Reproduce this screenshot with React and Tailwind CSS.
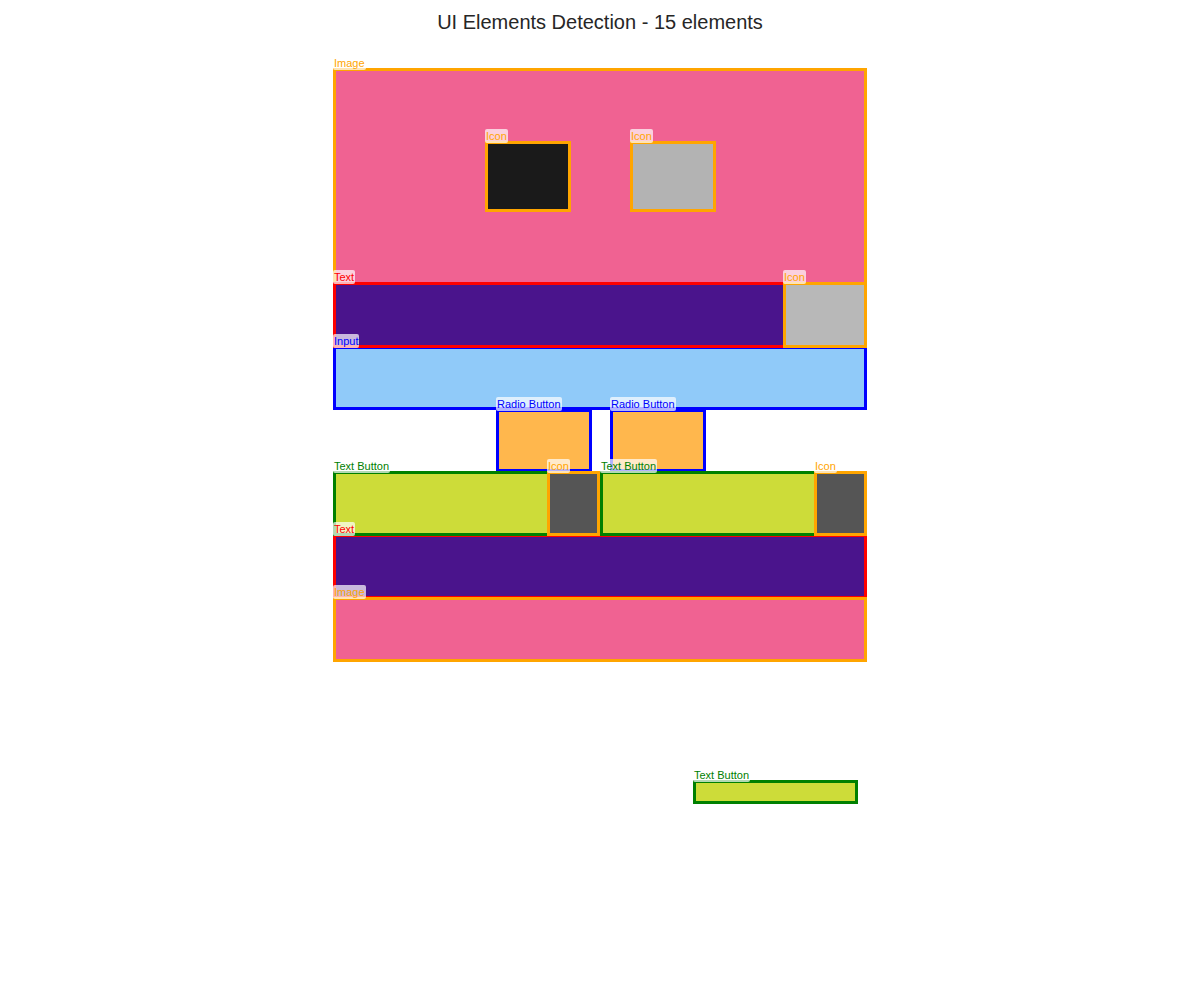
import React from 'react';

// detection boxes, outer coords on the 1200x1000 canvas, drawn in this order
const boxes = [
  { label: 'Image', x: 333, y: 68, w: 534, h: 217, tone: 'image' },
  { label: 'Icon', x: 485, y: 141, w: 86, h: 71, tone: 'iconDark' },
  { label: 'Icon', x: 630, y: 141, w: 86, h: 71, tone: 'iconLight' },
  { label: 'Input', x: 333, y: 346, w: 534, h: 64, tone: 'input' },
  { label: 'Text', x: 333, y: 282, w: 534, h: 66, tone: 'text' },
  { label: 'Icon', x: 783, y: 282, w: 84, h: 66, tone: 'iconGray' },
  { label: 'Radio Button', x: 496, y: 409, w: 96, h: 63, tone: 'radio' },
  { label: 'Radio Button', x: 610, y: 409, w: 96, h: 63, tone: 'radio' },
  { label: 'Text', x: 333, y: 534, w: 534, h: 65, tone: 'text' },
  { label: 'Text Button', x: 333, y: 471, w: 220, h: 65, tone: 'button' },
  { label: 'Icon', x: 547, y: 471, w: 53, h: 65, tone: 'iconMid' },
  { label: 'Text Button', x: 600, y: 471, w: 217, h: 65, tone: 'button' },
  { label: 'Icon', x: 814, y: 471, w: 53, h: 65, tone: 'iconMid' },
  { label: 'Image', x: 333, y: 597, w: 534, h: 65, tone: 'image' },
  { label: 'Text Button', x: 693, y: 780, w: 165, h: 24, tone: 'button' },
];

const toneBox = {
  image: 'bg-[#f06292] border-[#ffa500]',
  iconDark: 'bg-[#1a1a1a] border-[#ffa500]',
  iconLight: 'bg-[#b3b3b3] border-[#ffa500]',
  iconGray: 'bg-[#b8b8b8] border-[#ffa500]',
  iconMid: 'bg-[#555555] border-[#ffa500]',
  text: 'bg-[#4a148c] border-[#ff0000]',
  input: 'bg-[#90caf9] border-[#0000ff]',
  radio: 'bg-[#ffb74d] border-[#0000ff]',
  button: 'bg-[#cddc39] border-[#008000]',
};

const toneLabel = {
  image: 'text-[#ffa500]',
  iconDark: 'text-[#ffa500]',
  iconLight: 'text-[#ffa500]',
  iconGray: 'text-[#ffa500]',
  iconMid: 'text-[#ffa500]',
  text: 'text-[#ff0000]',
  input: 'text-[#0000ff]',
  radio: 'text-[#0000ff]',
  button: 'text-[#008000]',
};

const App = () => {
  return (
    <div className="w-[1200px] h-[1000px] bg-white font-['Liberation_Sans',Arial,sans-serif]">
      <h1 className="pt-[8px] text-center text-[20px] leading-[28px] text-[#262626]">
        UI Elements Detection - 15 elements
      </h1>
      <div className="relative">
        {boxes.map((b, i) => (
          <div
            key={`box-${i}`}
            className={`absolute box-border border-[3px] ${toneBox[b.tone]}`}
            style={{ left: b.x, top: b.y - 36, width: b.w, height: b.h }}
          />
        ))}
        {boxes.map((b, i) => (
          <span
            key={`label-${i}`}
            className={`absolute px-[1px] rounded-[2px] bg-white/70 text-[11px] leading-[14px] whitespace-nowrap ${toneLabel[b.tone]}`}
            style={{ left: b.x, top: b.y - 36 - 12 }}
          >
            {b.label}
          </span>
        ))}
      </div>
    </div>
  );
};

export default App;
